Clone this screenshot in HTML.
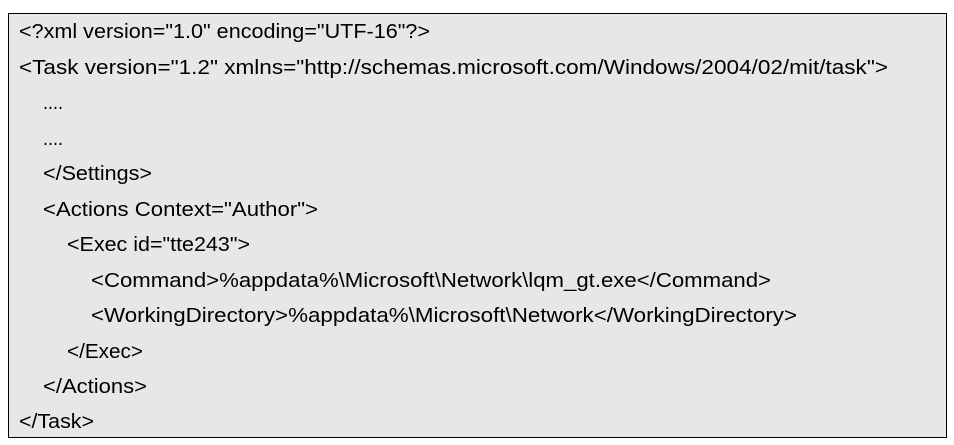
<!DOCTYPE html>
<html><head><style>
html,body{margin:0;padding:0;background:#fff;width:954px;height:445px;overflow:hidden}
</style></head><body>
<svg width="954" height="445" xmlns="http://www.w3.org/2000/svg" style="display:block">
<rect x="8.5" y="13.5" width="938" height="424" fill="#e7e7e7" stroke="#000" stroke-width="1"/>
<g font-family="Liberation Sans, sans-serif" font-size="20" fill="#000">
<text x="19" y="38" textLength="411" lengthAdjust="spacingAndGlyphs">&lt;?xml version="1.0" encoding="UTF-16"?&gt;</text>
<text x="19" y="74" textLength="869" lengthAdjust="spacingAndGlyphs">&lt;Task version="1.2" xmlns="http://schemas.microsoft.com/Windows/2004/02/mit/task"&gt;</text>
<text x="43" y="109" textLength="20" lengthAdjust="spacingAndGlyphs">....</text>
<text x="43" y="145" textLength="20" lengthAdjust="spacingAndGlyphs">....</text>
<text x="43" y="180" textLength="109" lengthAdjust="spacingAndGlyphs">&lt;/Settings&gt;</text>
<text x="43" y="216" textLength="275" lengthAdjust="spacingAndGlyphs">&lt;Actions Context="Author"&gt;</text>
<text x="67" y="251" textLength="183" lengthAdjust="spacingAndGlyphs">&lt;Exec id="tte243"&gt;</text>
<text x="91" y="287" textLength="680" lengthAdjust="spacingAndGlyphs">&lt;Command&gt;%appdata%\Microsoft\Network\lqm_gt.exe&lt;/Command&gt;</text>
<text x="91" y="322" textLength="706" lengthAdjust="spacingAndGlyphs">&lt;WorkingDirectory&gt;%appdata%\Microsoft\Network&lt;/WorkingDirectory&gt;</text>
<text x="67" y="358" textLength="76" lengthAdjust="spacingAndGlyphs">&lt;/Exec&gt;</text>
<text x="43" y="393" textLength="104" lengthAdjust="spacingAndGlyphs">&lt;/Actions&gt;</text>
<text x="19" y="428" textLength="75" lengthAdjust="spacingAndGlyphs">&lt;/Task&gt;</text>
</g>
</svg>
</body></html>
